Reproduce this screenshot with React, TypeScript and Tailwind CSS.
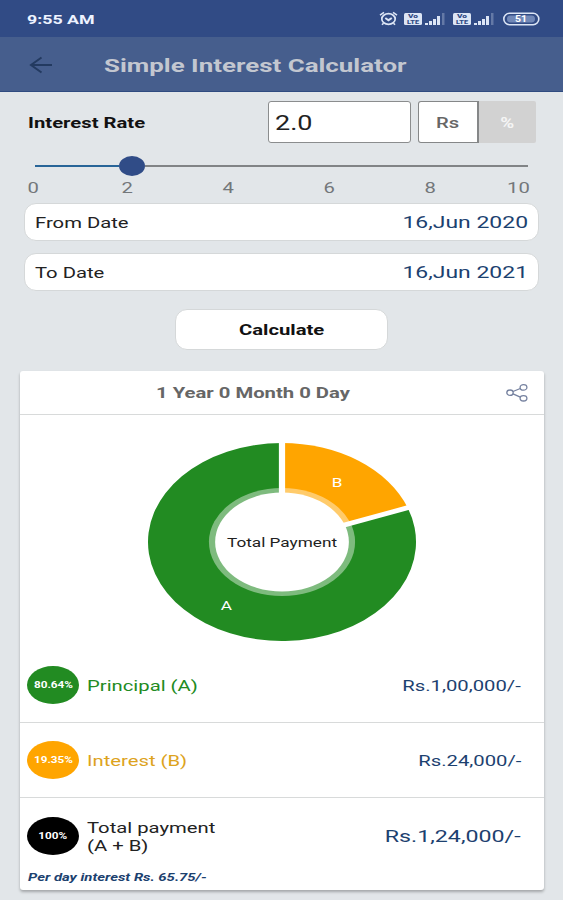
import React from 'react';
import clsx from 'clsx';

interface WideProps {
  className?: string;
  children: React.ReactNode;
}

// The whole interface uses a horizontally extended Roboto
const Wide: React.FC<WideProps> = ({ className, children }) => (
  <span className={clsx('inline-block whitespace-nowrap scale-x-[1.35] translate-y-px', className)}>{children}</span>
);

const AlarmIcon = () => (
  <svg className="w-[19px] h-[15px]" viewBox="0 0 19 15" fill="none" stroke="#dce5f5">
    <ellipse cx="9.5" cy="8" rx="6.7" ry="5.3" strokeWidth="1.7" />
    <path d="M1 4.2 5 1.4M18 4.2 14 1.4M4.5 12.2 3 13.8M14.5 12.2 16 13.8" strokeWidth="1.6" />
    <path d="M6.3 7 9.5 9.2 12.8 7" strokeWidth="2" />
  </svg>
);

const SimIcon = () => (
  <svg className="w-[42px] h-[14px]" viewBox="0 0 42 14">
    <rect x="0" y="1" width="18" height="12" rx="1.5" fill="#dce5f5" />
    <g fill="#314b85" fontFamily="Roboto, sans-serif" fontWeight="900" fontSize="5.5">
      <text x="4" y="6.4" textLength="10" lengthAdjust="spacingAndGlyphs">Vo</text>
      <text x="3" y="12" textLength="12" lengthAdjust="spacingAndGlyphs">LTE</text>
    </g>
    <g fill="#dce5f5">
      <rect x="21" y="11" width="3" height="2" />
      <rect x="25" y="9" width="3" height="4" />
      <rect x="29" y="7" width="3" height="6" />
      <rect x="33" y="4" width="3" height="9" />
      <rect x="38" y="1" width="2.5" height="12" opacity="0.3" />
    </g>
  </svg>
);

const BatteryIcon = () => (
  <svg className="w-[37px] h-[14px]" viewBox="0 0 37 14">
    <rect x="0.8" y="1.3" width="35" height="11.4" rx="5.7" fill="none" stroke="#dce5f5" strokeWidth="1.6" />
    <rect x="4" y="3.6" width="28" height="6.8" rx="3.4" fill="#7188b7" />
    <text x="12" y="10.3" textLength="12" lengthAdjust="spacingAndGlyphs" fill="#ffffff" fontFamily="Roboto, sans-serif" fontWeight="700" fontSize="9">51</text>
  </svg>
);

const ShareIcon = () => (
  <svg className="w-[22px] h-[18px]" viewBox="0 0 22 18" fill="none" stroke="#75819f" strokeWidth="1.3">
    <ellipse cx="4" cy="8.7" rx="3.2" ry="2.7" />
    <ellipse cx="17.5" cy="3.4" rx="3.4" ry="2.7" />
    <ellipse cx="17.5" cy="14.3" rx="3.4" ry="2.7" />
    <path d="M7 7.5 14.3 4.5M7 9.9 14.3 13.2" />
  </svg>
);

const Donut = () => (
  <svg className="w-[268px] h-[198px]" viewBox="-99 -99 198 198" preserveAspectRatio="none">
    <path d="M0 0 92.85 -34.35A99 99 0 1 1 0 -99Z" fill="#228b22" />
    <path d="M0 0V-99A99 99 0 0 1 92.85 -34.35Z" fill="#ffa500" />
    <circle r="54" fill="#ffffff" fillOpacity="0.42" />
    <path d="M0 0V-101M0 0 94.7 -35" stroke="#ffffff" strokeWidth="4.6" />
    <circle r="49.4" fill="#ffffff" />
    <g fontFamily="Roboto, sans-serif" fontSize="12.7" textAnchor="middle">
      <text x="0" y="4.5" fill="#222222">Total Payment</text>
      <g fill="#ffffff">
        <text x="-41.2" y="68.5">A</text>
        <text x="40.8" y="-55">B</text>
      </g>
    </g>
  </svg>
);

interface FieldProps {
  label: string;
  value: string;
}

const DateField: React.FC<FieldProps> = ({ label, value }) => (
  <div className="h-[38px] mx-6 px-[10px] rounded-xl bg-white border border-[#d5d8d9] flex items-center justify-between">
    <Wide className="origin-left text-[15px] text-[#222222]">{label}</Wide>
    <Wide className="origin-right text-[17px] text-[#1c416f]">{value}</Wide>
  </div>
);

const Badge: React.FC<WideProps> = ({ className, children }) => (
  <div className={clsx('w-[52px] h-[38px] rounded-[50%] flex items-center justify-center text-white text-[8.7px] font-bold shrink-0', className)}>
    <Wide>{children}</Wide>
  </div>
);

const ticks = ['0', '2', '4', '6', '8'];

export default function App() {
  return (
    <div className="w-full h-[900px] overflow-hidden bg-[#e2e6e9] font-[Roboto,sans-serif]">
      <div className="h-[37px] bg-[#314b85] pl-[27px] pr-[23px] flex items-center justify-between">
        <Wide className="origin-left text-[13.2px] font-bold text-[#eef3ff]">9:55 AM</Wide>
        <div className="flex items-center">
          <AlarmIcon />
          <span className="w-[6px]" />
          <SimIcon />
          <span className="w-[7px]" />
          <SimIcon />
          <span className="w-[8px]" />
          <BatteryIcon />
        </div>
      </div>

      <header className="h-[55px] bg-[#465e8d] border-b border-[#2f4b80] flex items-center pl-[29px] pt-[2px]">
        <svg className="w-[24px] h-[18px] shrink-0" viewBox="0 0 24 18" fill="none" stroke="#233a60" strokeWidth="2">
          <path d="M23 9H2.5M12.5 1.5 2 9 12.5 16.5" />
        </svg>
        <Wide className="origin-left ml-[51px] text-[19.2px] font-bold text-[#c3c7d0]">Simple Interest Calculator</Wide>
      </header>

      <section className="pt-[9px]">
        <div className="h-[42px] pl-[28px] pr-[27px] flex items-center">
          <Wide className="origin-left text-[15px] font-bold text-[#111111]">Interest Rate</Wide>
          <div className="ml-auto w-[143px] h-[42px] bg-white border border-[#8b8d8e] rounded-[3px] flex items-center pl-[6px]">
            <Wide className="origin-left text-[20px] text-[#222222]">2.0</Wide>
          </div>
          <div className="ml-[7px] w-[61px] h-[42px] bg-white border border-r-2 border-[#858788] rounded-l-[3px] flex items-center justify-center">
            <Wide className="text-[15px] font-medium text-[#666666]">Rs</Wide>
          </div>
          <div className="w-[57px] h-[42px] bg-[#d2d2d2] rounded-r-[2px] flex items-center justify-center">
            <Wide className="text-[14px] font-bold text-[#f5f5f5]">%</Wide>
          </div>
        </div>

        <div className="mt-[13px] mx-[35px] h-[20px] flex items-center">
          <div className="w-[84px] h-[2px] bg-[#286598]" />
          <div className="w-[26px] h-[20px] rounded-[50%] bg-[#304c87]" />
          <div className="flex-1 h-[2px] bg-[#818486]" />
        </div>

        <div className="h-[22px] pl-[28px] pr-[33px] flex items-center text-[15px] text-[#73777a]">
          {ticks.map((tick) => (
            <span key={tick} className={clsx('flex shrink-0', tick === '0' && 'w-[94px]', tick === '8' && 'w-[10px]', tick !== '0' && tick !== '8' && 'w-[101px]')}>
              <span className="w-[10px] flex justify-center">
                <Wide>{tick}</Wide>
              </span>
            </span>
          ))}
          <Wide className="origin-right ml-auto">10</Wide>
        </div>

        <div className="mt-[5px] flex flex-col gap-[12px]">
          <DateField label="From Date" value="16,Jun 2020" />
          <DateField label="To Date" value="16,Jun 2021" />
        </div>

        <button className="block mt-[18px] ml-[175px] w-[213px] h-[41px] rounded-xl bg-white border border-[#d5d8d9] text-[15px] font-bold text-[#111111]">
          <Wide>Calculate</Wide>
        </button>
      </section>

      <main className="mt-[21px] ml-[20px] w-[524px] h-[519px] bg-white rounded-[3px] shadow-[0_2px_3px_rgba(0,0,0,0.28)]">
        <div className="h-[44px] border-b border-[#d8dada] flex items-center pl-[136px] pr-[16px]">
          <Wide className="origin-left text-[15px] font-bold text-[#666666]">1 Year 0 Month 0 Day</Wide>
          <span className="ml-auto flex"><ShareIcon /></span>
        </div>

        <div className="h-[233px] pt-[28px] pl-[128px]">
          <Donut />
        </div>

        <div className="h-[75px] border-b border-[#d8dada] pl-[7px] pr-[23px] flex items-center">
          <Badge className="bg-[#228b22]">80.64%</Badge>
          <Wide className="origin-left ml-[8px] text-[15px] text-[#228b22]">Principal (A)</Wide>
          <Wide className="origin-right ml-auto text-[15px] text-[#1c416f]">Rs.1,00,000/-</Wide>
        </div>
        <div className="h-[75px] border-b border-[#d8dada] pl-[7px] pr-[23px] flex items-center">
          <Badge className="bg-[#ffa500]">19.35%</Badge>
          <Wide className="origin-left ml-[8px] text-[15px] text-[#dda31d]">Interest (B)</Wide>
          <Wide className="origin-right ml-auto text-[15px] text-[#1c416f]">Rs.24,000/-</Wide>
        </div>
        <div className="h-[76px] pl-[7px] pr-[23px] flex items-center">
          <Badge className="bg-black">100%</Badge>
          <Wide className="origin-left ml-[8px] text-[15px] leading-[18px] text-[#222222]">
            Total payment
            <br />
            (A + B)
          </Wide>
          <Wide className="origin-right ml-auto text-[17.2px] text-[#1c416f]">Rs.1,24,000/-</Wide>
        </div>
        <p className="pl-[8px] text-[11px] leading-[5px] font-bold italic text-[#1c416f]">
          <Wide className="origin-left">Per day interest Rs. 65.75/-</Wide>
        </p>
      </main>
    </div>
  );
}
